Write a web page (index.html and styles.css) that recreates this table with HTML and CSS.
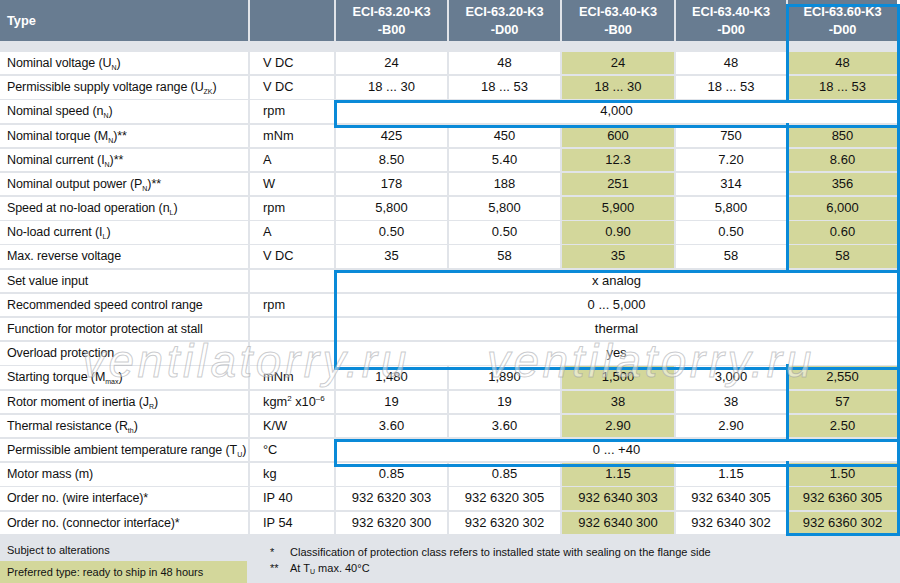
FILE: index.html
```html
<!DOCTYPE html>
<html lang="en">
<head>
<meta charset="utf-8">
<title>ECI-63 K3 technical data</title>
<link rel="stylesheet" href="styles.css">
</head>
<body>
<div class="sheet">
  <div class="grid">
    <div class="h h-type">Type</div>
    <div class="h"></div>
    <div class="h">ECI-63.20-K3<br>-B00</div>
    <div class="h">ECI-63.20-K3<br>-D00</div>
    <div class="h">ECI-63.40-K3<br>-B00</div>
    <div class="h">ECI-63.40-K3<br>-D00</div>
    <div class="h c7 top">ECI-63.60-K3<br>-D00</div>
    <div class="band-fill"></div>
    <div class="band c7"></div>

    <div class="cell lbl">Nominal voltage (U<sub class="s">N</sub>)</div>
    <div class="cell unit">V DC</div>
    <div class="cell">24</div><div class="cell">48</div><div class="cell y">24</div><div class="cell">48</div><div class="cell y c7">48</div>

    <div class="cell lbl">Permissible supply voltage range (U<sub class="s">ZK</sub>)</div>
    <div class="cell unit">V DC</div>
    <div class="cell">18 ... 30</div><div class="cell">18 ... 53</div><div class="cell y">18 ... 30</div><div class="cell">18 ... 53</div><div class="cell y c7">18 ... 53</div>

    <div class="cell lbl">Nominal speed (n<sub class="s">N</sub>)</div>
    <div class="cell unit">rpm</div>
    <div class="cell span ft fb">4,000</div>

    <div class="cell lbl">Nominal torque (M<sub class="s">N</sub>)**</div>
    <div class="cell unit">mNm</div>
    <div class="cell">425</div><div class="cell">450</div><div class="cell y">600</div><div class="cell">750</div><div class="cell y c7">850</div>

    <div class="cell lbl">Nominal current (I<sub class="s">N</sub>)**</div>
    <div class="cell unit">A</div>
    <div class="cell">8.50</div><div class="cell">5.40</div><div class="cell y">12.3</div><div class="cell">7.20</div><div class="cell y c7">8.60</div>

    <div class="cell lbl">Nominal output power (P<sub class="s">N</sub>)**</div>
    <div class="cell unit">W</div>
    <div class="cell">178</div><div class="cell">188</div><div class="cell y">251</div><div class="cell">314</div><div class="cell y c7">356</div>

    <div class="cell lbl">Speed at no-load operation (n<sub class="s">L</sub>)</div>
    <div class="cell unit">rpm</div>
    <div class="cell">5,800</div><div class="cell">5,800</div><div class="cell y">5,900</div><div class="cell">5,800</div><div class="cell y c7">6,000</div>

    <div class="cell lbl">No-load current (I<sub class="s">L</sub>)</div>
    <div class="cell unit">A</div>
    <div class="cell">0.50</div><div class="cell">0.50</div><div class="cell y">0.90</div><div class="cell">0.50</div><div class="cell y c7">0.60</div>

    <div class="cell lbl">Max. reverse voltage</div>
    <div class="cell unit">V DC</div>
    <div class="cell">35</div><div class="cell">58</div><div class="cell y">35</div><div class="cell">58</div><div class="cell y c7">58</div>

    <div class="cell lbl">Set value input</div>
    <div class="cell unit"></div>
    <div class="cell span ft">x analog</div>

    <div class="cell lbl">Recommended speed control range</div>
    <div class="cell unit">rpm</div>
    <div class="cell span">0 ... 5,000</div>

    <div class="cell lbl">Function for motor protection at stall</div>
    <div class="cell unit"></div>
    <div class="cell span">thermal</div>

    <div class="cell lbl">Overload protection</div>
    <div class="cell unit"></div>
    <div class="cell span fb">yes</div>

    <div class="cell lbl">Starting torque (M<sub class="s">max</sub>)</div>
    <div class="cell unit">mNm</div>
    <div class="cell">1,480</div><div class="cell">1,890</div><div class="cell y">1,500</div><div class="cell">3,000</div><div class="cell y c7">2,550</div>

    <div class="cell lbl">Rotor moment of inertia (J<sub class="s">R</sub>)</div>
    <div class="cell unit">kgm<sup class="p">2</sup> x10<sup class="p">–6</sup></div>
    <div class="cell">19</div><div class="cell">19</div><div class="cell y">38</div><div class="cell">38</div><div class="cell y c7">57</div>

    <div class="cell lbl">Thermal resistance (R<sub class="s">th</sub>)</div>
    <div class="cell unit">K/W</div>
    <div class="cell">3.60</div><div class="cell">3.60</div><div class="cell y">2.90</div><div class="cell">2.90</div><div class="cell y c7">2.50</div>

    <div class="cell lbl">Permissible ambient temperature range (T<sub class="s">U</sub>)</div>
    <div class="cell unit">°C</div>
    <div class="cell span ft fb">0 ... +40</div>

    <div class="cell lbl">Motor mass (m)</div>
    <div class="cell unit">kg</div>
    <div class="cell">0.85</div><div class="cell">0.85</div><div class="cell y">1.15</div><div class="cell">1.15</div><div class="cell y c7">1.50</div>

    <div class="cell lbl">Order no. (wire interface)*</div>
    <div class="cell unit">IP 40</div>
    <div class="cell">932 6320 303</div><div class="cell">932 6320 305</div><div class="cell y">932 6340 303</div><div class="cell">932 6340 305</div><div class="cell y c7">932 6360 305</div>

    <div class="cell lbl">Order no. (connector interface)*</div>
    <div class="cell unit">IP 54</div>
    <div class="cell">932 6320 300</div><div class="cell">932 6320 302</div><div class="cell y">932 6340 300</div><div class="cell">932 6340 302</div><div class="cell y c7 last">932 6360 302</div>
  </div>

  <div class="mark m1">ventilatorry.ru</div>
  <div class="mark m2">ventilatorry.ru</div>

  <div class="foot">
    <div class="foot-left">
      <div class="subj">Subject to alterations</div>
      <div class="pref">Preferred type: ready to ship in 48 hours</div>
    </div>
    <div class="notes">
      <span>*</span><span>Classification of protection class refers to installed state with sealing on the flange side</span>
      <span>**</span><span>At T<sub class="fs">U</sub> max. 40°C</span>
    </div>
  </div>
</div>
</body>
</html>
```

FILE: styles.css
```css
html, body {
  margin: 0;
  padding: 0;
  background: #ffffff;
}

body {
  font-family: "Liberation Sans", Arial, sans-serif;
  font-size: 13px;
  color: #111111;
}

.sheet {
  position: relative;
  width: 900px;
  height: 583px;
  overflow: hidden;
}

.grid {
  display: grid;
  width: 897px;
  grid-template-columns: 248px 84px 111px 111px 112px 110px 109px;
  grid-template-rows: 41px 7.4px repeat(20, 22.4px);
  column-gap: 2px;
  row-gap: 1.8px;
  background: #e1e4e9;
}

.h {
  background: #687c91;
  color: #ffffff;
  font-weight: bold;
  font-size: 12.8px;
  display: flex;
  align-items: center;
  justify-content: center;
  text-align: center;
  line-height: 18px;
}

.h-type {
  justify-content: flex-start;
  padding-left: 7px;
}

.band-fill {
  grid-column: 1 / 7;
}

.band {
  grid-column: 7;
}

.cell {
  background: #ffffff;
  line-height: 22.4px;
  text-align: center;
  white-space: nowrap;
}

.lbl {
  text-align: left;
  padding-left: 7px;
  font-size: 12.5px;
  letter-spacing: -0.1px;
}

.unit {
  text-align: left;
  padding-left: 13px;
  font-size: 12.8px;
}

.y {
  background: #d3d79b;
}

.span {
  grid-column: 3 / 8;
  position: relative;
}

.c7 {
  position: relative;
}

.c7::after,
.span::after {
  content: "";
  position: absolute;
  left: -2px;
  right: -2.5px;
  top: -2px;
  bottom: -2px;
  border-left: 3.4px solid #0a8ad8;
  border-right: 3.4px solid #0a8ad8;
  pointer-events: none;
  z-index: 2;
}

.ft::after {
  top: 0;
  border-top: 3.4px solid #0a8ad8;
}

.fb::after {
  bottom: -5.2px;
  border-bottom: 3.4px solid #0a8ad8;
}

.h.c7::after {
  top: 4px;
  border-top: 3.4px solid #0a8ad8;
}

.c7.last::after {
  bottom: -2.5px;
  border-bottom: 3.4px solid #0a8ad8;
}

.s {
  font-size: 7px;
  line-height: 0;
  letter-spacing: 0;
  vertical-align: -3px;
}

.p {
  font-size: 8px;
  line-height: 0;
  vertical-align: 5px;
}

.mark {
  position: absolute;
  top: 338px;
  font-size: 46px;
  line-height: 46px;
  font-style: italic;
  letter-spacing: 3.5px;
  white-space: nowrap;
  color: rgba(255, 255, 255, 0.45);
  -webkit-text-stroke: 1px rgba(150, 152, 158, 0.5);
  z-index: 3;
  pointer-events: none;
}

.m1 {
  left: 82px;
}

.m2 {
  left: 487px;
}

.foot {
  display: flex;
  background: #e1e4e9;
  height: 49px;
  font-size: 11px;
}

.foot-left {
  width: 247px;
}

.subj {
  height: 27px;
  box-sizing: border-box;
  padding: 6px 0 0 7px;
  line-height: 20px;
}

.pref {
  height: 22px;
  line-height: 22px;
  padding-left: 7px;
  background: #d3d79b;
}

.notes {
  display: grid;
  grid-template-columns: 20px auto;
  align-content: start;
  padding: 10px 0 0 23px;
  line-height: 16px;
}

.fs {
  font-size: 7px;
  line-height: 0;
  vertical-align: -2px;
}
```
